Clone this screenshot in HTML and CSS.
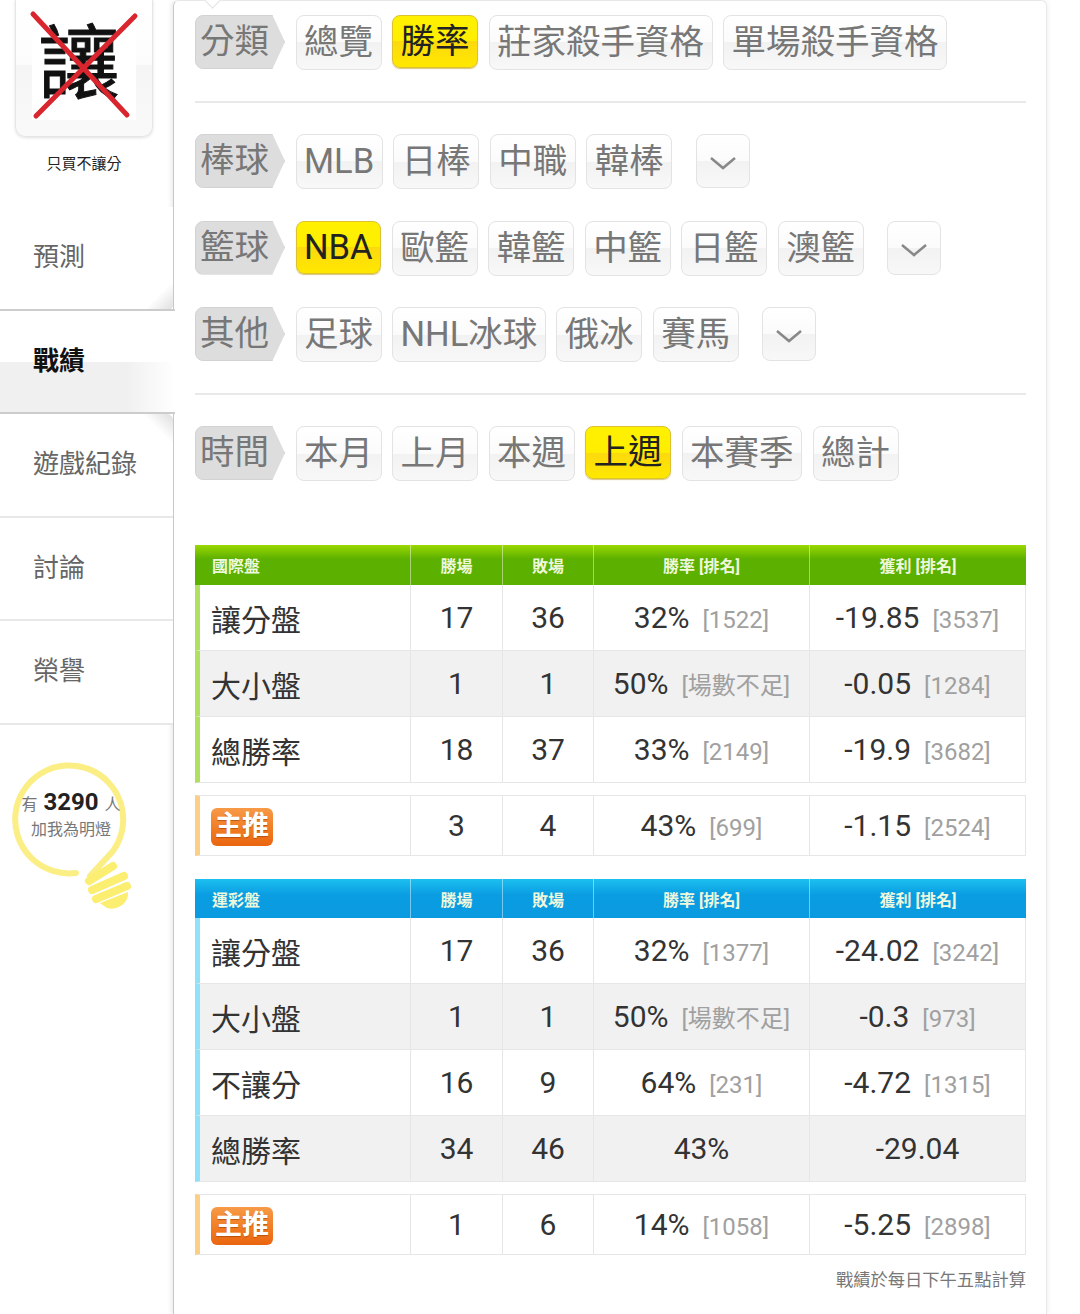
FILE: index.html
```html
<!DOCTYPE html>
<html lang="zh-Hant">
<head>
  <meta charset="UTF-8" />
  <meta name="viewport" content="width=device-width, initial-scale=1.0"/>
  <title>戰績</title>
  <link rel="stylesheet" href="styles.css">
</head>
<body>

  <div class="page">
    <!-- Sidebar -->
    <aside class="sidebar">
      <div class="profile">
        <div class="logo">
          <div class="logo-inner">
            <span class="logo-char">讓</span>
            <svg class="logo-cross" viewBox="0 0 138 137">
              <path d="M18 14 L112 115 M120 16 L21 116" stroke="#d9252e" stroke-width="5" stroke-linecap="round" fill="none"/>
            </svg>
          </div>
        </div>
        <div class="caption">只買不讓分</div>
      </div>

      <nav class="nav">
        <a class="nav-item before-active">預測</a>
        <a class="nav-item active">戰績</a>
        <a class="nav-item after-active">遊戲紀錄</a>
        <a class="nav-item">討論</a>
        <a class="nav-item">榮譽</a>
      </nav>

      <div class="bulb">
        <svg class="bulb-icon" viewBox="0 754 173 170">
          <path d="M76 873 A54 54 0 1 1 113 851 L90 876" fill="none" stroke="#fbee85" stroke-width="6" stroke-linecap="round"/>
          <path d="M89 881 L113 866 M92 890 L124 876 M96 899 L127 886" fill="none" stroke="#fbee70" stroke-width="8" stroke-linecap="round"/>
          <path d="M100 903 L128 892 C129 903 118 911 107 908 Z" fill="#fbee70"/>
        </svg>
        <div class="bulb-text">
          <div class="bulb-count">有<b>3290</b>人</div>
          <div>加我為明燈</div>
        </div>
      </div>
    </aside>

    <!-- Main panel -->
    <main class="panel">
      <div class="filter-row">
        <span class="tag">分類</span>
        <a class="btn">總覽</a>
        <a class="btn selected">勝率</a>
        <a class="btn">莊家殺手資格</a>
        <a class="btn">單場殺手資格</a>
      </div>

      <hr class="divider">

      <div class="filter-group">
        <div class="filter-row">
          <span class="tag">棒球</span>
          <a class="btn">MLB</a>
          <a class="btn">日棒</a>
          <a class="btn">中職</a>
          <a class="btn">韓棒</a>
          <a class="btn more"><svg viewBox="0 0 28 16"><path d="M2 3 L14 13 L26 3" fill="none" stroke="#888" stroke-width="2.5"/></svg></a>
        </div>
        <div class="filter-row">
          <span class="tag">籃球</span>
          <a class="btn selected">NBA</a>
          <a class="btn">歐籃</a>
          <a class="btn">韓籃</a>
          <a class="btn">中籃</a>
          <a class="btn">日籃</a>
          <a class="btn">澳籃</a>
          <a class="btn more"><svg viewBox="0 0 28 16"><path d="M2 3 L14 13 L26 3" fill="none" stroke="#888" stroke-width="2.5"/></svg></a>
        </div>
        <div class="filter-row">
          <span class="tag">其他</span>
          <a class="btn">足球</a>
          <a class="btn">NHL冰球</a>
          <a class="btn">俄冰</a>
          <a class="btn">賽馬</a>
          <a class="btn more"><svg viewBox="0 0 28 16"><path d="M2 3 L14 13 L26 3" fill="none" stroke="#888" stroke-width="2.5"/></svg></a>
        </div>
      </div>

      <hr class="divider">

      <div class="filter-row">
        <span class="tag">時間</span>
        <a class="btn">本月</a>
        <a class="btn">上月</a>
        <a class="btn">本週</a>
        <a class="btn selected">上週</a>
        <a class="btn">本賽季</a>
        <a class="btn">總計</a>
      </div>

      <!-- International -->
      <section class="stats green first">
        <table>
          <thead>
            <tr><th>國際盤</th><th>勝場</th><th>敗場</th><th>勝率 [排名]</th><th>獲利 [排名]</th></tr>
          </thead>
          <tbody>
            <tr><td>讓分盤</td><td>17</td><td>36</td><td>32%<small>[1522]</small></td><td>-19.85<small>[3537]</small></td></tr>
            <tr><td>大小盤</td><td>1</td><td>1</td><td>50%<small>[場數不足]</small></td><td>-0.05<small>[1284]</small></td></tr>
            <tr><td>總勝率</td><td>18</td><td>37</td><td>33%<small>[2149]</small></td><td>-19.9<small>[3682]</small></td></tr>
          </tbody>
        </table>
        <table class="pick">
          <tr><td><span class="badge">主推</span></td><td>3</td><td>4</td><td>43%<small>[699]</small></td><td>-1.15<small>[2524]</small></td></tr>
        </table>
      </section>

      <!-- Sports lottery -->
      <section class="stats blue">
        <table>
          <thead>
            <tr><th>運彩盤</th><th>勝場</th><th>敗場</th><th>勝率 [排名]</th><th>獲利 [排名]</th></tr>
          </thead>
          <tbody>
            <tr><td>讓分盤</td><td>17</td><td>36</td><td>32%<small>[1377]</small></td><td>-24.02<small>[3242]</small></td></tr>
            <tr><td>大小盤</td><td>1</td><td>1</td><td>50%<small>[場數不足]</small></td><td>-0.3<small>[973]</small></td></tr>
            <tr><td>不讓分</td><td>16</td><td>9</td><td>64%<small>[231]</small></td><td>-4.72<small>[1315]</small></td></tr>
            <tr><td>總勝率</td><td>34</td><td>46</td><td>43%</td><td>-29.04</td></tr>
          </tbody>
        </table>
        <table class="pick">
          <tr><td><span class="badge">主推</span></td><td>1</td><td>6</td><td>14%<small>[1058]</small></td><td>-5.25<small>[2898]</small></td></tr>
        </table>
      </section>

      <p class="note">戰績於每日下午五點計算</p>
    </main>
  </div>

</body>
</html>
```

FILE: styles.css
```css
* {
  box-sizing: border-box;
  padding: 0;
  margin: 0;
  font-family: Roboto, 'Noto Sans CJK TC', sans-serif;
}

html, body {
  height: 1314px;
  overflow: hidden;
  background: #fff;
}

.page {
  display: flex;
  width: 1080px;
  height: 1314px;
}

/* Sidebar */
.sidebar {
  width: 173px;
  flex-shrink: 0;
  position: relative;
  z-index: 1;
}

.profile {
  height: 207px;
  padding-left: 15px;
}

.logo {
  width: 138px;
  height: 137px;
  border: 1px solid #e6e6e6;
  border-top: none;
  border-radius: 0 0 10px 10px;
  box-shadow: 0 1px 3px rgba(0, 0, 0, 0.12);
  background: linear-gradient(#fff 0, #fcfcfc 48%, #f5f5f5 48%, #f9f9f9 100%);
}

.logo-inner {
  position: relative;
  height: 120px;
  margin: 0 16px;
  background: #fff;
  text-align: center;
}

.logo-char {
  display: block;
  font-size: 81px;
  line-height: 130px;
  font-weight: 400;
  color: #111;
  -webkit-text-stroke: 1px #111;
  margin-left: -21px;
  margin-right: -11px;
}

.logo-cross {
  position: absolute;
  top: 0;
  left: -17px;
  width: 138px;
  height: 137px;
}

.caption {
  width: 138px;
  margin-top: 15px;
  text-align: center;
  font-size: 15px;
  line-height: 24px;
  color: #222;
}

.nav-item {
  display: block;
  position: relative;
  height: 103.5px;
  padding: 15px 0 0 33px;
  line-height: 70px;
  font-size: 26px;
  color: #666;
  border-bottom: 2px solid #e8e8e8;
  background: #fff;
}

.nav-item.active {
  width: 175px;
  color: #111;
  font-weight: 700;
  border-bottom: 2px solid #ccc;
  border-top: 2px solid #ccc;
  margin-top: -2px;
  height: 105.5px;
  padding-top: 15px;
  background:
    linear-gradient(to right, rgba(255, 255, 255, 0) 72%, #fff 100%),
    linear-gradient(#fff 50%, #f0f0f0 50%);
}

.before-active {
  border-bottom: none;
}

.before-active::after,
.after-active::after {
  content: "";
  position: absolute;
  right: 0;
  width: 40px;
  height: 28px;
}

.before-active::after {
  bottom: 0;
  background: linear-gradient(135deg, #fff 55%, #ddd 100%);
  border-radius: 0 0 6px 0;
}

.after-active::after {
  top: 0;
  background: linear-gradient(45deg, #fff 55%, #ddd 100%);
  border-radius: 0 6px 0 0;
}

.bulb {
  position: relative;
  height: 170px;
  margin-top: 29px;
}

.bulb-icon {
  display: block;
  width: 173px;
  height: 170px;
}

.bulb-text {
  position: absolute;
  top: 36px;
  left: 11px;
  width: 120px;
  text-align: center;
  font-size: 16px;
  line-height: 25px;
  color: #777;
}

.bulb-count b {
  font-size: 24px;
  color: #222;
  margin: 0 6px;
}

/* Main panel */
.panel {
  position: relative;
  width: 874px;
  height: 1314px;
  padding: 14px 20px 0 21px;
  border-left: 1px solid #c8c8c8;
  border-right: 1px solid #e8e8e8;
  border-top: 1px solid #e8e8e8;
  border-radius: 6px 6px 0 0;
  box-shadow: -2px 0 4px rgba(0, 0, 0, 0.08), 2px 0 4px rgba(0, 0, 0, 0.04);
}

.panel::before {
  content: "";
  position: absolute;
  top: -8px;
  left: 32px;
  width: 12px;
  height: 12px;
  background: #fff;
  border-right: 1px solid #e2e2e2;
  border-bottom: 1px solid #e2e2e2;
  transform: rotate(45deg);
}

.filter-row {
  display: flex;
  align-items: flex-start;
  gap: 10.5px;
  height: 55px;
}

.filter-group {
  display: flex;
  flex-direction: column;
  gap: 31.5px;
}

.divider {
  border: none;
  border-top: 2px solid #e9e9e9;
  margin: 31px 0;
}

.tag {
  width: 90px;
  height: 54px;
  padding-left: 4px;
  font-size: 34.5px;
  line-height: 50px;
  color: #777;
  background: #ddd;
  border: 1px solid #d2d2d2;
  border-radius: 8px;
  clip-path: polygon(0 0, 86% 0, 100% 50%, 86% 100%, 0 100%);
}

.btn {
  display: block;
  height: 55px;
  padding: 0 7.5px;
  font-size: 34.5px;
  line-height: 52px;
  color: #777;
  border: 1px solid #e3e3e3;
  border-radius: 8px;
  background: linear-gradient(#fff 0, #fbfbfb 50%, #f2f2f2 50%, #f8f8f8 100%);
}

.btn.selected {
  height: 53px;
  line-height: 50px;
  color: #222;
  border-color: #dcc230;
  background: linear-gradient(#fff000 0, #ffee00 50%, #fcd90e 50%, #ffe800 100%);
  box-shadow: 0 1px 1px rgba(180, 140, 0, 0.5);
}

.btn.more {
  width: 54px;
  height: 54px;
  margin-left: 13px;
  padding: 20px 12px 0;
}

.btn.more svg {
  display: block;
  width: 28px;
  height: 16px;
}

/* Stats tables */
.stats {
  margin-top: 23px;
}

.stats.first {
  margin-top: 64px;
}

table {
  width: 831px;
  border-collapse: separate;
  border-spacing: 0;
  table-layout: fixed;
}

th:nth-child(1), td:nth-child(1) { width: 215px; }
th:nth-child(2), td:nth-child(2) { width: 92px; }
th:nth-child(3), td:nth-child(3) { width: 91px; }
th:nth-child(4), td:nth-child(4) { width: 216px; }
th:nth-child(5), td:nth-child(5) { width: 217px; }

th {
  height: 40px;
  font-size: 16px;
  font-weight: 700;
  color: #eef8dc;
  border-left: 1px solid rgba(255, 255, 255, 0.45);
}

th:first-child {
  text-align: left;
  padding-left: 17px;
  border-left: none;
}

.green th {
  background: linear-gradient(#9ad800 0, #5cb000 35%, #5bb000 100%);
}

.blue th {
  height: 39px;
  background: linear-gradient(#1cc0f0 0, #0a9de2 40%, #0a9ae0 100%);
}

td {
  height: 66px;
  text-align: center;
  font-size: 30px;
  color: #333;
  border-left: 1px solid #e6e6e6;
  border-bottom: 1px solid #e6e6e6;
}

td:first-child {
  text-align: left;
  padding-left: 11px;
  border-left: 5px solid;
}

td:last-child {
  border-right: 1px solid #e6e6e6;
}

.green td:first-child { border-left-color: #afe060; }
.blue td:first-child { border-left-color: #8fe2fa; }

tbody tr:nth-child(even) td {
  background: #f1f1f1;
}

td small {
  margin-left: 13px;
  font-size: 24px;
  color: #a0a0a0;
}

.pick {
  margin-top: 12px;
}

.pick td {
  height: 61px;
  border-top: 1px solid #e6e6e6;
}

.stats .pick td:first-child {
  border-left-color: #fbcf85;
}

.badge {
  display: inline-block;
  width: 62px;
  height: 38px;
  margin-top: 2px;
  text-align: center;
  font-size: 27px;
  line-height: 36px;
  font-weight: 700;
  color: #fff;
  border-radius: 6px;
  background: linear-gradient(#f79a48 0, #f07a20 60%, #ea6510 100%);
  text-shadow: 0 1px 1px rgba(150, 60, 0, 0.6);
}

.note {
  margin-top: 11px;
  text-align: right;
  font-size: 17.3px;
  line-height: 28px;
  color: #777;
}
```
